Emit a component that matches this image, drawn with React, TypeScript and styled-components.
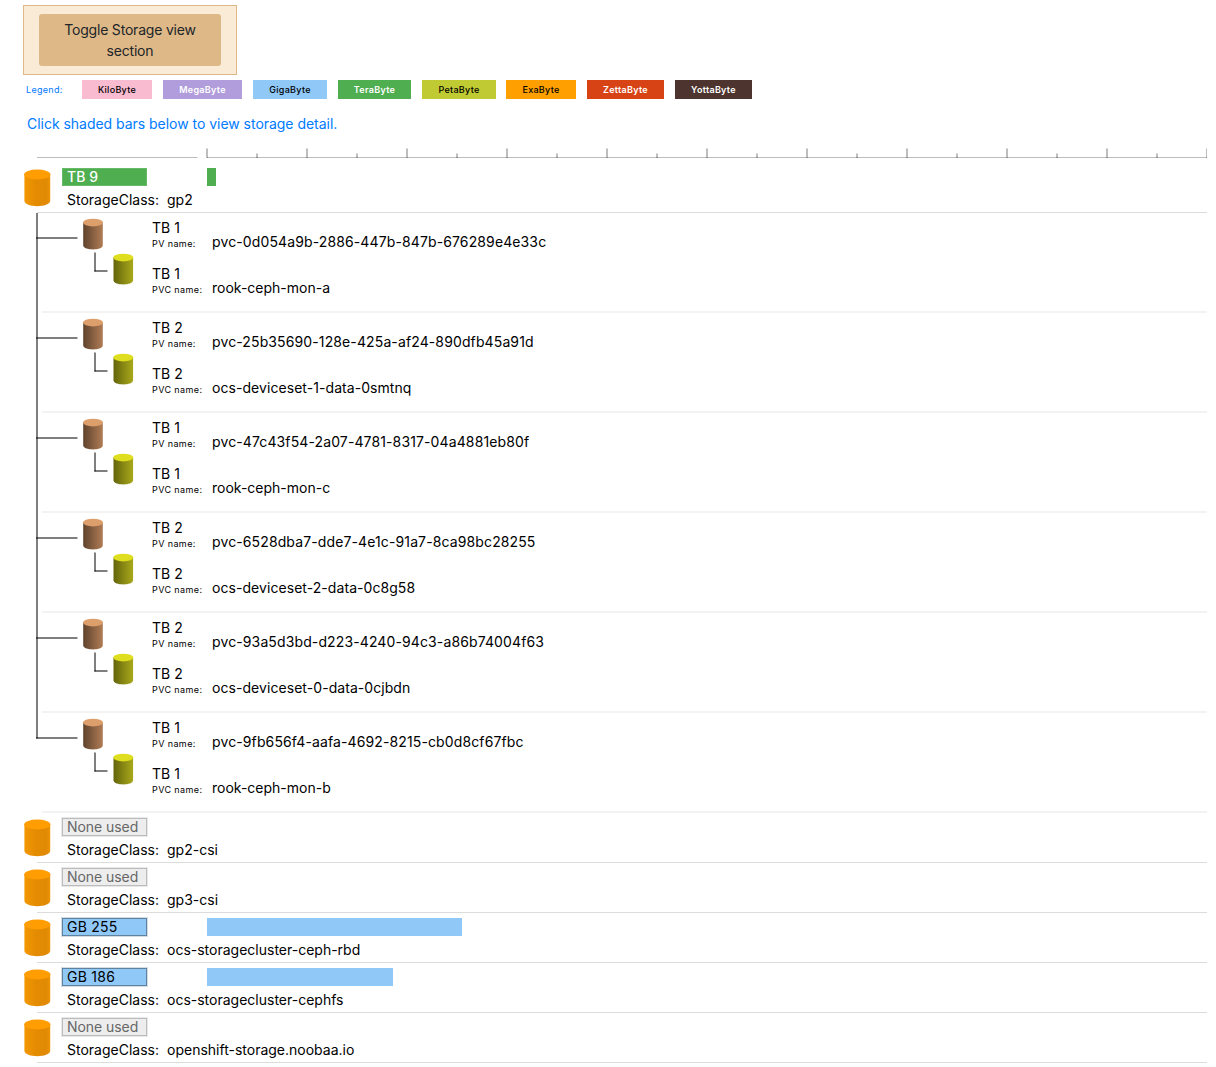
import React from "react";
import styled, { createGlobalStyle } from "styled-components";

const GlobalStyle = createGlobalStyle`
  html, body { margin: 0; padding: 0; background: #fff; }
  body {
    font-family: Inter, "Liberation Sans", sans-serif;
    font-size: 14px;
    color: #000;
  }
  *, *::before, *::after { box-sizing: border-box; }
`;

const Page = styled.main`
  width: 1207px;
  height: 1067px;
  padding: 5px 0 0 23px;
  overflow: hidden;
`;

const ToggleFrame = styled.div`
  width: 214px;
  height: 70px;
  padding: 8px 15px;
  border: 1px solid #deb887;
  background: #faebd7;
`;

const ToggleButton = styled.button`
  display: block;
  width: 182px;
  height: 52px;
  padding: 0 20px 1px;
  border: 0;
  border-radius: 3px;
  background: #deb887;
  color: #212529;
  font: inherit;
  line-height: 21px;
  letter-spacing: -0.2px;
`;

const Legend = styled.div`
  display: flex;
  align-items: center;
  height: 19px;
  margin-top: 5px;
  padding-left: 3px;
  font-size: 9px;
  line-height: 19px;
`;

const LegendLabel = styled.span`
  width: 56px;
  color: #007bff;
  letter-spacing: 0.3px;
`;

const Swatch = styled.span<{ $bg: string; $fg: string; $w: number; $gap: number }>`
  width: ${(p) => p.$w}px;
  margin-right: ${(p) => p.$gap}px;
  height: 19px;
  background: ${(p) => p.$bg};
  color: ${(p) => p.$fg};
  font-weight: ${(p) => (p.$fg === "#fff" ? 600 : 500)};
  letter-spacing: 0.3px;
  text-align: center;
`;

const Hint = styled.p`
  height: 20px;
  margin: 15px 0 0;
  padding-left: 4px;
  color: #007bff;
  line-height: 20px;
  letter-spacing: -0.03px;
`;

const Ruler = styled.svg`
  display: block;
  width: 1184px;
  height: 29px;
`;

const ClassRow = styled.section`
  display: flex;
  position: relative;
  height: 50px;
  padding-top: 5px;
  background: linear-gradient(#dcdcdc, #dcdcdc) 14px 49px / 1170px 1px no-repeat;
`;

const ClassIcon = styled.svg`
  width: 29px;
  height: 40px;
  margin-right: 10px;
  flex: none;
`;

const ClassInfo = styled.div`
  flex: 1;
`;

const UsageLine = styled.div`
  display: flex;
  gap: 60px;
  height: 18px;
`;

type PillKind = "tb" | "gb" | "none";
const pillStyles: Record<PillKind, { bg: string; fg: string; edge: string; halo: string; spacing: number; weight: number }> = {
  tb: { bg: "#4fae50", fg: "#fff", edge: "#67b968", halo: "transparent", spacing: 0.05, weight: 500 },
  gb: { bg: "#90c9f8", fg: "#000", edge: "#5e829f", halo: "#d4dce3", spacing: 0.25, weight: 400 },
  none: { bg: "#ededed", fg: "#666", edge: "#bcbcbc", halo: "#e8e8e8", spacing: -0.06, weight: 400 },
};

const Pill = styled.span<{ $kind: PillKind }>`
  width: 85px;
  height: 18px;
  padding-left: 5px;
  background: ${(p) => pillStyles[p.$kind].bg};
  box-shadow:
    inset 0 0 0 1px ${(p) => pillStyles[p.$kind].edge},
    0 0 0 1px ${(p) => pillStyles[p.$kind].halo};
  color: ${(p) => pillStyles[p.$kind].fg};
  font-weight: ${(p) => pillStyles[p.$kind].weight};
  letter-spacing: ${(p) => pillStyles[p.$kind].spacing}px;
  line-height: 18px;
`;

const Bar = styled.span`
  height: 18px;
`;

const ClassName = styled.div`
  display: flex;
  height: 20px;
  margin-top: 4px;
  padding-left: 5px;
  line-height: 20px;
`;

const ClassLabel = styled.span`
  width: 100px;
`;

const VolumeRow = styled.div`
  display: flex;
  height: 100px;
  background: linear-gradient(#f3f3f3, #f3f3f3) 19px 98px / 1165px 2px no-repeat;
`;

const Tree = styled.svg`
  width: 129px;
  height: 100px;
  flex: none;
`;

const VolumeInfo = styled.div`
  padding-top: 6px;
`;

const Claim = styled.div`
  height: 46px;
`;

const Size = styled.div`
  height: 18px;
  line-height: 18px;
`;

const NameLine = styled.div`
  display: flex;
  height: 18px;
  margin-top: -4px;
  line-height: 18px;
`;

const NameLabel = styled.span`
  width: 60px;
  font-size: 9px;
  line-height: 21px;
  letter-spacing: 0.4px;
`;

const Name = styled.span<{ $spacing: number }>`
  letter-spacing: ${(p) => p.$spacing}px;
`;

const legend = [
  { name: "KiloByte", bg: "#f8bbd0", fg: "#000", w: 70, gap: 11 },
  { name: "MegaByte", bg: "#b19ddb", fg: "#fff", w: 79, gap: 11 },
  { name: "GigaByte", bg: "#90c9f8", fg: "#000", w: 74, gap: 11 },
  { name: "TeraByte", bg: "#4fae50", fg: "#fff", w: 73, gap: 11 },
  { name: "PetaByte", bg: "#c0ca33", fg: "#000", w: 74, gap: 10 },
  { name: "ExaByte", bg: "#ffa000", fg: "#000", w: 70, gap: 11 },
  { name: "ZettaByte", bg: "#d84315", fg: "#fff", w: 77, gap: 11 },
  { name: "YottaByte", bg: "#4e342e", fg: "#fff", w: 77, gap: 0 },
];

const volumes = [
  { size: "TB 1", pv: "pvc-0d054a9b-2886-447b-847b-676289e4e33c", pvc: "rook-ceph-mon-a" },
  { size: "TB 2", pv: "pvc-25b35690-128e-425a-af24-890dfb45a91d", pvc: "ocs-deviceset-1-data-0smtnq" },
  { size: "TB 1", pv: "pvc-47c43f54-2a07-4781-8317-04a4881eb80f", pvc: "rook-ceph-mon-c" },
  { size: "TB 2", pv: "pvc-6528dba7-dde7-4e1c-91a7-8ca98bc28255", pvc: "ocs-deviceset-2-data-0c8g58" },
  { size: "TB 2", pv: "pvc-93a5d3bd-d223-4240-94c3-a86b74004f63", pvc: "ocs-deviceset-0-data-0cjbdn" },
  { size: "TB 1", pv: "pvc-9fb656f4-aafa-4692-8215-cb0d8cf67fbc", pvc: "rook-ceph-mon-b" },
];

type StorageClass = { name: string; kind: PillKind; used: string; bar: number };
const primary: StorageClass = { name: "gp2", kind: "tb", used: "TB 9", bar: 9 };
const others: StorageClass[] = [
  { name: "gp2-csi", kind: "none", used: "None used", bar: 0 },
  { name: "gp3-csi", kind: "none", used: "None used", bar: 0 },
  { name: "ocs-storagecluster-ceph-rbd", kind: "gb", used: "GB 255", bar: 255 },
  { name: "ocs-storagecluster-cephfs", kind: "gb", used: "GB 186", bar: 186 },
  { name: "openshift-storage.noobaa.io", kind: "none", used: "None used", bar: 0 },
];

function Gradients() {
  return (
    <svg width="0" height="0" style={{ display: "block" }}>
      <defs>
        <linearGradient id="classBody">
          <stop offset="0" stopColor="#f49803" />
          <stop offset="0.45" stopColor="#e38b02" />
          <stop offset="0.85" stopColor="#e08a04" />
          <stop offset="1" stopColor="#ee9304" />
        </linearGradient>
        <linearGradient id="pvBody">
          <stop offset="0" stopColor="#5f432d" />
          <stop offset="1" stopColor="#b07c55" />
        </linearGradient>
        <linearGradient id="pvcBody">
          <stop offset="0" stopColor="#64640c" />
          <stop offset="1" stopColor="#a9a91b" />
        </linearGradient>
      </defs>
    </svg>
  );
}

function Cylinder({ x, y, body, top }: { x: number; y: number; body: string; top: string }) {
  return (
    <g transform={`translate(${x} ${y})`}>
      <path d="M0.2 4V27C0.8 29.6 4.8 30.9 10 30.9S19.2 29.6 19.8 27V4Z" fill={`url(#${body})`} />
      <ellipse cx="10" cy="4.1" rx="10" ry="3.9" fill={top} />
    </g>
  );
}

function ClassHeader({ item }: { item: StorageClass }) {
  return (
    <ClassRow>
      <ClassIcon viewBox="0 0 29 40">
        <path d="M1.4 6V33C2 36.2 7.5 38.2 14.3 38.2S26.6 36.2 27.2 33V6Z" fill="url(#classBody)" />
        <ellipse cx="14.3" cy="6.5" rx="13.1" ry="5" fill="#ff9d03" />
      </ClassIcon>
      <ClassInfo>
        <UsageLine>
          <Pill $kind={item.kind}>{item.used}</Pill>
          {item.bar > 0 && <Bar style={{ width: item.bar, background: pillStyles[item.kind].bg }} />}
        </UsageLine>
        <ClassName>
          <ClassLabel>StorageClass:</ClassLabel>
          <span>{item.name}</span>
        </ClassName>
      </ClassInfo>
    </ClassRow>
  );
}

export default function App() {
  const ticks = Array.from({ length: 21 }, (_, i) => i);
  return (
    <Page>
      <GlobalStyle />
      <Gradients />
      <ToggleFrame>
        <ToggleButton>Toggle Storage view section</ToggleButton>
      </ToggleFrame>
      <Legend>
        <LegendLabel>Legend:</LegendLabel>
        {legend.map((l) => (
          <Swatch key={l.name} $bg={l.bg} $fg={l.fg} $w={l.w} $gap={l.gap}>
            {l.name}
          </Swatch>
        ))}
      </Legend>
      <Hint>Click shaded bars below to view storage detail.</Hint>
      <Ruler viewBox="0 0 1184 29">
        <g stroke="#000" strokeOpacity="0.26">
          <path d="M14 23.5H174.5M184 23.5H1184" />
          {ticks.map((i) => (
            <path key={i} d={`M${184 + i * 50} ${i % 2 ? 19.5 : 14.5}V24`} strokeWidth={2} />
          ))}
        </g>
      </Ruler>
      <ClassHeader item={primary} />
      {volumes.map((v, i) => (
        <VolumeRow key={v.pv}>
          <Tree viewBox="0 0 129 100">
            <g stroke="#000" strokeOpacity="0.5" strokeWidth="2" fill="none">
              <path d={i === volumes.length - 1 ? "M14 0V25.5" : "M14 0V100"} />
              <path d="M13 25H54.5" />
              <path d="M72 39.5V58.5" />
              <path d="M71.5 58H84.5" />
            </g>
            <Cylinder x={60} y={5.5} body="pvBody" top="#dc9f6c" />
            <Cylinder x={90.3} y={40.5} body="pvcBody" top="#dede1e" />
          </Tree>
          <VolumeInfo>
            <Claim>
              <Size>{v.size}</Size>
              <NameLine>
                <NameLabel>PV name:</NameLabel>
                <Name $spacing={0.12}>{v.pv}</Name>
              </NameLine>
            </Claim>
            <Claim>
              <Size>{v.size}</Size>
              <NameLine>
                <NameLabel>PVC name:</NameLabel>
                <Name $spacing={v.pvc.startsWith("ocs") ? 0.06 : 0}>{v.pvc}</Name>
              </NameLine>
            </Claim>
          </VolumeInfo>
        </VolumeRow>
      ))}
      {others.map((c) => (
        <ClassHeader key={c.name} item={c} />
      ))}
    </Page>
  );
}
